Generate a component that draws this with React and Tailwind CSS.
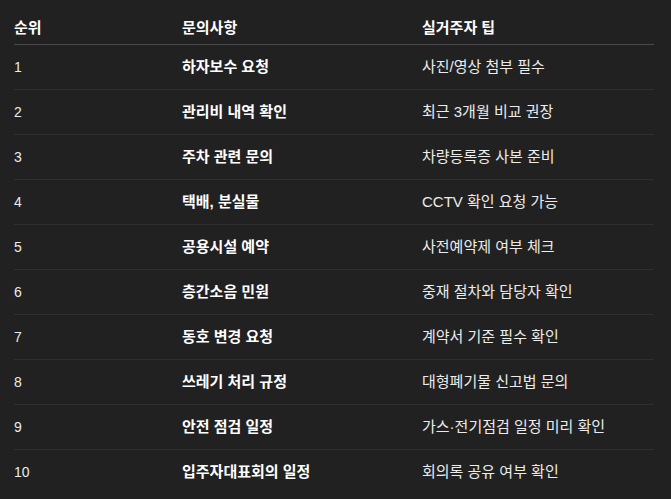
import React from "react";

const rows = [
  ["1", "하자보수 요청", "사진/영상 첨부 필수"],
  ["2", "관리비 내역 확인", "최근 3개월 비교 권장"],
  ["3", "주차 관련 문의", "차량등록증 사본 준비"],
  ["4", "택배, 분실물", "CCTV 확인 요청 가능"],
  ["5", "공용시설 예약", "사전예약제 여부 체크"],
  ["6", "층간소음 민원", "중재 절차와 담당자 확인"],
  ["7", "동호 변경 요청", "계약서 기준 필수 확인"],
  ["8", "쓰레기 처리 규정", "대형폐기물 신고법 문의"],
  ["9", "안전 점검 일정", "가스·전기점검 일정 미리 확인"],
  ["10", "입주자대표회의 일정", "회의록 공유 여부 확인"],
];

export default function App() {
  return (
    <div
      className="min-h-[499px] w-full bg-[#212121] px-[14px] pt-[14px] text-[15px] text-[#ececec]"
      style={{ fontFamily: '"Liberation Sans", "Noto Sans CJK KR", sans-serif' }}
    >
      <div className="w-[640px]">
        <div className="grid h-[31px] grid-cols-[168px_240px_232px] items-center border-b border-[#4a4a4a] pb-[1px] font-bold text-white">
          <div>순위</div>
          <div>문의사항</div>
          <div>실거주자 팁</div>
        </div>
        {rows.map((r, i) => (
          <div
            key={r[0]}
            className={
              "grid h-[45px] grid-cols-[168px_240px_232px] items-center " +
              (i < rows.length - 1 ? "border-b border-[#2f2f2f]" : "")
            }
          >
            <div className="text-[14px]">{r[0]}</div>
            <div className="font-bold text-white">{r[1]}</div>
            <div>{r[2]}</div>
          </div>
        ))}
      </div>
    </div>
  );
}
